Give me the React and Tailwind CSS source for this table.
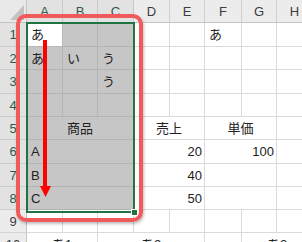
import React from "react";

const cols = ["A", "B", "C", "D", "E", "F", "G", "H"];
const rowNums = [1, 2, 3, 4, 5, 6, 7, 8, 9, 10];

// cells of the body: [row, colStart, span, text, align, selected]
const cells = [
  [1, 0, 1, "あ", "left", "active"],
  [1, 1, 1, "", "left", true],
  [1, 2, 1, "", "left", true],
  [1, 3, 1, "", "left"],
  [1, 4, 1, "", "left"],
  [1, 5, 1, "あ", "left"],
  [1, 6, 1, "", "left"],
  [1, 7, 1, "", "left"],
  [2, 0, 1, "あ", "left", true],
  [2, 1, 1, "い", "left", true],
  [2, 2, 1, "う", "left", true],
  [2, 3, 1, "", "left"],
  [2, 4, 1, "", "left"],
  [2, 5, 1, "", "left"],
  [2, 6, 1, "", "left"],
  [2, 7, 1, "", "left"],
  [3, 0, 1, "", "left", true],
  [3, 1, 1, "", "left", true],
  [3, 2, 1, "う", "left", true],
  [3, 3, 1, "", "left"],
  [3, 4, 1, "", "left"],
  [3, 5, 1, "", "left"],
  [3, 6, 1, "", "left"],
  [3, 7, 1, "", "left"],
  [4, 0, 1, "", "left", true],
  [4, 1, 1, "", "left", true],
  [4, 2, 1, "", "left", true],
  [4, 3, 1, "", "left"],
  [4, 4, 1, "", "left"],
  [4, 5, 1, "", "left"],
  [4, 6, 1, "", "left"],
  [4, 7, 1, "", "left"],
  [5, 0, 3, "商品", "center", true],
  [5, 3, 2, "売上", "center"],
  [5, 5, 2, "単価", "center"],
  [5, 7, 1, "", "left"],
  [6, 0, 3, "A", "left", true],
  [6, 3, 2, "20", "right"],
  [6, 5, 2, "100", "right"],
  [6, 7, 1, "", "left"],
  [7, 0, 3, "B", "left", true],
  [7, 3, 2, "40", "right"],
  [7, 5, 2, "", "right"],
  [7, 7, 1, "", "left"],
  [8, 0, 3, "C", "left", true],
  [8, 3, 2, "50", "right"],
  [8, 5, 2, "", "right"],
  [8, 7, 1, "", "left"],
  [9, 0, 1, "", "left"],
  [9, 1, 1, "", "left"],
  [9, 2, 1, "", "left"],
  [9, 3, 1, "", "left"],
  [9, 4, 1, "", "left"],
  [9, 5, 1, "", "left"],
  [9, 6, 1, "", "left"],
  [9, 7, 1, "", "left"],
  [10, 0, 2, "あ1", "center"],
  [10, 2, 3, "あ2", "center"],
  [10, 5, 1, "", "left"],
  [10, 6, 2, "あ3", "center"],
];

const colStartClass = [
  "col-start-2",
  "col-start-3",
  "col-start-4",
  "col-start-5",
  "col-start-6",
  "col-start-7",
  "col-start-8",
  "col-start-9",
];
const spanClass = { 1: "col-span-1", 2: "col-span-2", 3: "col-span-3" };
const rowStartClass = {
  1: "row-start-2",
  2: "row-start-3",
  3: "row-start-4",
  4: "row-start-5",
  5: "row-start-6",
  6: "row-start-7",
  7: "row-start-8",
  8: "row-start-9",
  9: "row-start-10",
  10: "row-start-11",
};
const alignClass = {
  left: "justify-start pl-[4px]",
  center: "justify-center",
  right: "justify-end pr-[2px]",
};

function Cell({ row, col, span, text, align, selected }) {
  const bg =
    selected === "active"
      ? "bg-white border-[#b9b9b9]"
      : selected
      ? "bg-[#c6c6c6] border-[#b3b3b3]"
      : "bg-white border-[#dadada]";
  return (
    <div
      className={`${rowStartClass[row]} ${colStartClass[col]} ${spanClass[span]} flex items-center border-r border-b ${bg} ${alignClass[align]} text-[13px] text-[#222] leading-none`}
    >
      {text}
    </div>
  );
}

export default function App() {
  return (
    <div
      className="relative w-[302px] h-[242px] overflow-hidden bg-white"
      style={{ fontFamily: '"Liberation Sans", "Noto Sans CJK JP", sans-serif' }}
    >
      <div className="grid w-[313px] grid-cols-[27px_36px_35px_36px_36px_35px_37px_35px_36px] grid-rows-[23px_24px_23px_24px_23px_23px_24px_23px_23px_23px_23px]">
        {/* select-all corner */}
        <div className="row-start-1 col-start-1 relative bg-[#e9e9e9] border-r border-b border-[#c4c4c4]">
          <svg className="absolute left-0 top-0" width="27" height="23">
            <polygon points="24,5 24,20 10,20" fill="#c2c2c2" />
          </svg>
        </div>

        {/* column headers */}
        {cols.map((c, i) => (
          <div
            key={c}
            className={`row-start-1 ${colStartClass[i]} flex items-center justify-center border-r border-b text-[13px] leading-none ${
              i < 3
                ? "bg-[#e2e2e2] border-r-[#c8c8c8] border-b-[#b8b8b8] text-[#315a45]"
                : "bg-[#ececec] border-r-[#d0d0d0] border-b-[#c4c4c4] text-[#3c3c3c]"
            }`}
          >
            {c}
          </div>
        ))}

        {/* row headers */}
        {rowNums.map((n) => (
          <div
            key={n}
            className={`${rowStartClass[n]} col-start-1 flex items-center justify-center border-r border-b text-[13px] leading-none ${
              n <= 8
                ? "bg-[#e2e2e2] border-r-[#b8b8b8] border-b-[#cdcdcd] text-[#315a45]"
                : "bg-[#ececec] border-r-[#c4c4c4] border-b-[#d4d4d4] text-[#3c3c3c]"
            }`}
          >
            {n}
          </div>
        ))}

        {cells.map(([row, col, span, text, align, selected]) => (
          <Cell
            key={`${row}-${col}`}
            row={row}
            col={col}
            span={span}
            text={text}
            align={align}
            selected={selected}
          />
        ))}
      </div>

      {/* selection frame + fill handle */}
      <div className="absolute left-[26px] top-[22px] w-[109px] h-[191px] border-2 border-[#217346]" />
      <div className="absolute left-[131px] top-[209px] w-[7px] h-[7px] bg-[#217346] border border-white" />

      {/* callout frame */}
      <div className="absolute left-[16px] top-[14px] w-[127px] h-[208px] rounded-[10px] border-4 border-[#f15a5a] shadow-[1px_2px_3px_rgba(0,0,0,0.25)]" />

      {/* down arrow */}
      <div className="absolute left-[43px] top-[40px] w-[4px] h-[148px] bg-[#ff0000]" />
      <svg className="absolute left-[40px] top-[186px]" width="11" height="11">
        <polygon points="0,0 11,0 5.5,11" fill="#ff0000" />
      </svg>
    </div>
  );
}
